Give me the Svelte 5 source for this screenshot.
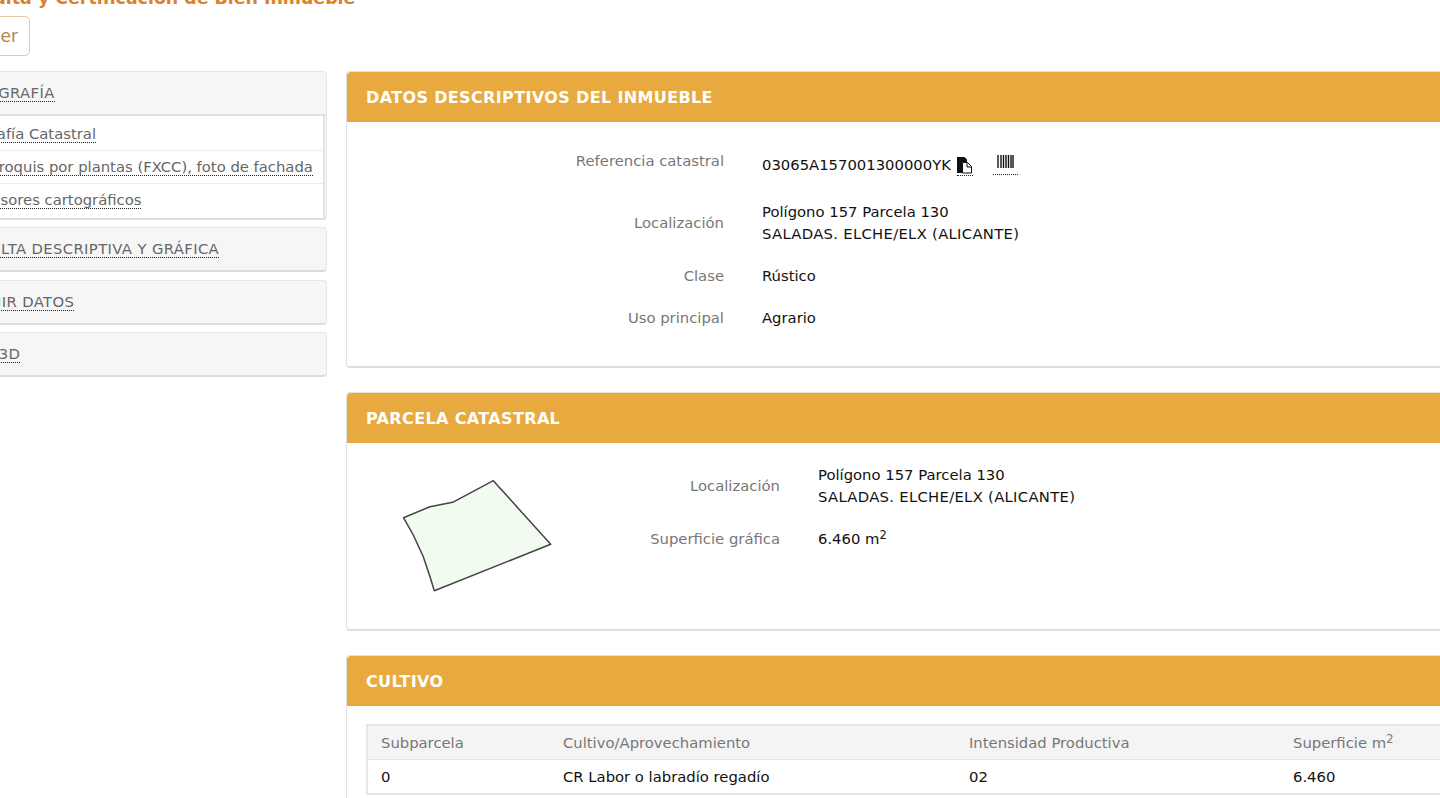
<script>
    const sideLinks = ['Cartografía Catastral', 'Otros croquis por plantas (FXCC), foto de fachada', 'Otros visores cartográficos'];
    const sidePanels = ['CONSULTA DESCRIPTIVA Y GRÁFICA', 'IMPRIMIR DATOS', 'VISOR 3D'];
    const columns = ['Subparcela', 'Cultivo/Aprovechamiento', 'Intensidad Productiva'];
</script>

<div class="page">
    <h1>Consulta y Certificación de Bien Inmueble</h1>
    <button class="back">Volver</button>

    <div class="layout">
        <aside>
            <div class="side-panel open">
                <div class="side-head"><a href="#top">CARTOGRAFÍA</a></div>
                <ul>
                    {#each sideLinks as link}
                        <li><a href="#top">{link}</a></li>
                    {/each}
                </ul>
            </div>
            {#each sidePanels as panel}
                <div class="side-panel">
                    <div class="side-head"><a href="#top">{panel}</a></div>
                </div>
            {/each}
        </aside>

        <main>
            <section class="first">
                <h2>DATOS DESCRIPTIVOS DEL INMUEBLE</h2>
                <div class="rows">
                    <div class="label ref-label">Referencia catastral</div>
                    <div class="value ref">
                        <span>03065A157001300000YK</span>
                        <span class="copy">
                            <svg width="16" height="17" viewBox="0 0 16 17">
                                <path d="M0 0h7.500l2.500 2.500V5H5.500v11H0z" fill="#111" />
                                <path d="M5.500 5.500h5l4 4v6.500h-9z" fill="#fff" stroke="#111" />
                                <path d="M10 5.500v4.500h4.500" fill="none" stroke="#111" />
                            </svg>
                        </span>
                        <span class="barcode">
                            <svg width="17" height="13" viewBox="0 0 17 13">
                                <path d="M1 0v13M4 0v13M6.500 0v13M9 0v13M11.500 0v13M14 0v13M16 0v13" stroke="#111" stroke-width="1.400" />
                            </svg>
                        </span>
                    </div>
                    <div class="label">Localización</div>
                    <div class="value">Polígono 157 Parcela 130<br /><span class="caps">SALADAS. ELCHE/ELX (ALICANTE)</span></div>
                    <div class="label">Clase</div>
                    <div class="value">Rústico</div>
                    <div class="label">Uso principal</div>
                    <div class="value">Agrario</div>
                </div>
            </section>

            <section class="second">
                <h2>PARCELA CATASTRAL</h2>
                <div class="parcel">
                    <svg class="plot" width="170" height="130" viewBox="0 0 170 130">
                        <path d="M13.500 47.700 40 36.700 62.700 32.300 103.300 10.700 160.700 74.300 44.300 120.700 40 106.700 33.300 86.700 23.300 65Z" fill="#f1fbf0" stroke="#444" stroke-width="1.500" stroke-linejoin="round" />
                    </svg>
                    <div class="rows small">
                        <div class="label">Localización</div>
                        <div class="value">Polígono 157 Parcela 130<br /><span class="caps">SALADAS. ELCHE/ELX (ALICANTE)</span></div>
                        <div class="label">Superficie gráfica</div>
                        <div class="value">6.460 m<sup>2</sup></div>
                    </div>
                </div>
            </section>

            <section class="third">
                <h2>CULTIVO</h2>
                <div class="table-wrap">
                    <table>
                        <thead>
                            <tr>
                                {#each columns as col}
                                    <th>{col}</th>
                                {/each}
                                <th>Superficie m<sup>2</sup></th>
                            </tr>
                        </thead>
                        <tbody>
                            <tr>
                                <td>0</td>
                                <td>CR Labor o labradío regadío</td>
                                <td>02</td>
                                <td>6.460</td>
                            </tr>
                        </tbody>
                    </table>
                </div>
            </section>
        </main>
    </div>
</div>

<style>
    :global(body) {
        margin: 0;
        background: #fff;
        overflow: hidden;
        height: 798px;
    }

    .page {
        margin: -13px 0 0 -70px;
        font-family: "DejaVu Sans", Verdana, sans-serif;
        font-size: 14.8px;
        line-height: 22px;
        color: #111;
        width: 1700px;
    }

    h1 {
        margin: 0 0 0 16px;
        height: 29px;
        font-size: 17.4px;
        line-height: 22px;
        font-weight: bold;
        color: #d9822b;
    }

    .back {
        display: block;
        height: 40px;
        width: 100px;
        padding: 0 0 0 34px;
        background: #fff;
        border: 1px solid #e3c9a0;
        border-radius: 5px;
        font: 17px "DejaVu Sans", Verdana, sans-serif;
        color: #b5874c;
        text-align: left;
    }

    .layout {
        display: grid;
        grid-template-columns: 397px 1340px;
        column-gap: 19px;
        margin-top: 15px;
    }

    aside {
        display: flex;
        flex-direction: column;
        gap: 7.4px;
    }

    .side-panel {
        background: #f6f6f6;
        border: 1px solid #e6e6e6;
        border-bottom: 2px solid #dcdcdc;
        border-radius: 4px;
    }

    .side-head {
        height: 42px;
        padding-left: 15px;
        line-height: 42px;
        letter-spacing: 0.37px;
    }

    .open .side-head {
        border-bottom: 2px solid #e0e0e0;
    }

    a {
        color: #666;
        text-decoration: none;
        border-bottom: 1px dotted #222;
    }

    ul {
        margin: 0 1px 0 0;
        padding: 0;
        list-style: none;
        background: #fff;
        border-right: 2px solid #e4e4e4;
    }

    li {
        height: 32px;
        line-height: 32px;
        padding-left: 15px;
        border-top: 1px solid #ececec;
    }

    li:first-child {
        height: 34px;
        line-height: 36px;
        padding-left: 10px;
        border-top: 0;
    }

    li:last-child {
        height: 34px;
        padding-left: 12px;
    }

    section {
        border: 1px solid #e2e2e2;
        border-bottom: 2px solid #dedede;
        border-radius: 4px;
    }

    h2 {
        margin: 0;
        height: 50px;
        padding-left: 19px;
        background: #e8a93e;
        border-radius: 4px 4px 0 0;
        color: #fff;
        font-size: 16px;
        letter-spacing: 0.36px;
        line-height: 52px;
        font-weight: bold;
    }

    .first {
        height: 294px;
        margin-bottom: 24px;
    }

    .second {
        height: 236px;
        margin-bottom: 24px;
    }

    .rows {
        display: grid;
        grid-template-columns: 377px 1fr;
        column-gap: 38px;
        row-gap: 20px;
        padding-top: 28px;
        align-items: center;
    }

    .label {
        text-align: right;
        color: #777;
    }

    .caps {
        letter-spacing: 0.3px;
    }

    .ref-label {
        align-self: start;
    }

    .ref {
        display: flex;
        align-items: flex-start;
        height: 31px;
        padding-top: 4px;
        box-sizing: border-box;
    }

    .copy {
        display: block;
        height: 18px;
        margin: 3px 0 0 6px;
        border-bottom: 1px dotted #222;
    }

    .copy svg, .barcode svg {
        display: block;
    }

    .barcode {
        display: block;
        height: 21px;
        width: 25px;
        margin: -1px 0 0 20px;
        border-bottom: 1px dotted #222;
    }

    .barcode svg {
        margin: 2px auto 0;
    }

    .parcel {
        display: flex;
    }

    .plot {
        margin: 27px 0 0 43px;
        flex: none;
    }

    .small {
        grid-template-columns: 220px 1fr;
        padding-top: 21px;
        row-gap: 20px;
        flex: 1;
        align-content: start;
    }

    sup {
        font-size: 11.500px;
        line-height: 0;
        vertical-align: 5px;
    }

    .table-wrap {
        padding: 18px 0 20px 19px;
    }

    table {
        width: 1300px;
        border-collapse: collapse;
        table-layout: fixed;
        border: 2px solid #e6e6e6;
    }

    th, td {
        height: 33px;
        padding: 0 0 0 13px;
        text-align: left;
        font-weight: normal;
    }

    th {
        background: #f4f4f4;
        color: #777;
        border-bottom: 1px solid #e4e4e4;
    }

    th:nth-child(1) { width: 169px; }
    th:nth-child(2) { width: 393px; }
    th:nth-child(3) { width: 311px; }
</style>
